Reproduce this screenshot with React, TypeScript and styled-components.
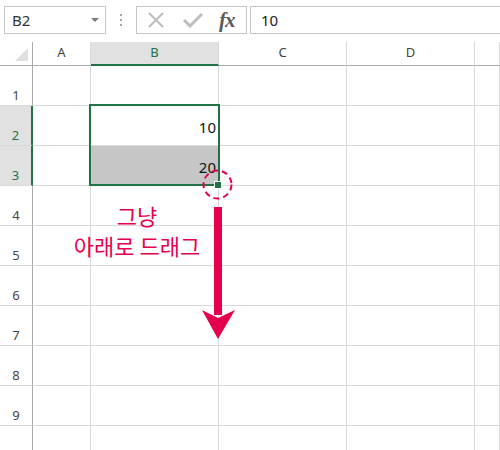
import styled, { createGlobalStyle } from "styled-components"

const GREEN = '#217346'
const PINK = '#e5004f'
const GRID = '#d9d9d9'

const columns = ['A', 'B', 'C', 'D', '']
const rows = [1, 2, 3, 4, 5, 6, 7, 8, 9, 10]

const values: Record<string, string> = { B2: '10', B3: '20' }
const selectedRows = [2, 3]

const GlobalStyle = createGlobalStyle`
    body {
        margin: 0;
        background: #fff;
        font-family: "Noto Sans", "Noto Sans CJK KR", sans-serif;
        overflow: hidden;
    }
`

const App = () => {
    return(
        <Page>
            <GlobalStyle />
            <FormulaBar>
                <NameBox>
                    B2
                    <Caret />
                </NameBox>
                <Dots><i /><i /><i /></Dots>
                <ButtonBox>
                    <svg width="18" height="16" viewBox="0 0 18 16">
                        <path d="M2 1 L16 15 M16 1 L2 15" stroke="#bdbdbd" strokeWidth="2" fill="none" />
                    </svg>
                    <svg width="20" height="16" viewBox="0 0 20 16">
                        <path d="M1 8 L7 14 L19 2" stroke="#bdbdbd" strokeWidth="3" fill="none" />
                    </svg>
                    <Fx>fx</Fx>
                </ButtonBox>
                <FormulaInput>10</FormulaInput>
            </FormulaBar>

            <Sheet>
                <Corner><Triangle /></Corner>
                {columns.map((col) => (
                    <ColHeader key={col || 'E'} $active={col === 'B'}>{col}</ColHeader>
                ))}
                {rows.map((row) => (
                    <RowGroup key={row}>
                        <RowHeader $active={selectedRows.includes(row)}>{row < 10 ? row : ''}</RowHeader>
                        {columns.map((col) => (
                            <Cell key={col + row} $filled={col === 'B' && row === 3}>
                                {values[col + row]}
                            </Cell>
                        ))}
                    </RowGroup>
                ))}
            </Sheet>

            <Selection>
                <Handle />
            </Selection>

            <Overlay width="500" height="450" viewBox="0 0 500 450">
                <circle cx="217.5" cy="184.5" r="14" fill="none" stroke={PINK} strokeWidth="2" strokeDasharray="6 4" />
                <rect x="214" y="207" width="8" height="108" fill={PINK} />
                <polygon points="202,310 218,339 235,310 218,318" fill={PINK} />
            </Overlay>

            <Label>그냥<br />아래로 드래그</Label>
        </Page>
    )
}
export default App


const Page = styled.div`
    position: relative;
    width: 500px;
    height: 450px;
    overflow: hidden;
`

const FormulaBar = styled.div`
    display: flex;
    align-items: center;
    height: 40px;
    padding-left: 4px;
`

const NameBox = styled.div`
    position: relative;
    box-sizing: border-box;
    width: 102px;
    height: 28px;
    border: 1px solid #c6c6c6;
    padding: 3px 0 0 7px;
    font-size: 15px;
    color: #333;
`

const Caret = styled.span`
    position: absolute;
    right: 6px;
    top: 11px;
    border-left: 4px solid transparent;
    border-right: 4px solid transparent;
    border-top: 4px solid #7a7a7a;
`

const Dots = styled.div`
    width: 30px;
    display: flex;
    flex-direction: column;
    align-items: center;
    gap: 3px;
    i {
        width: 2px;
        height: 2px;
        background: #a8a8a8;
    }
`

const ButtonBox = styled.div`
    box-sizing: border-box;
    width: 111px;
    height: 28px;
    border: 1px solid #c6c6c6;
    display: flex;
    align-items: center;
    padding-left: 10px;
    gap: 18px;
`

const Fx = styled.span`
    font-family: "Liberation Serif", serif;
    font-style: italic;
    font-weight: bold;
    font-size: 21px;
    color: #5a5a5a;
    margin-left: -2px;
    letter-spacing: -1px;
`

const FormulaInput = styled.div`
    box-sizing: border-box;
    flex: 1;
    height: 28px;
    margin-left: 3px;
    border: 1px solid #c6c6c6;
    border-right: none;
    padding: 3px 0 0 10px;
    font-size: 15px;
    color: #222;
`

const Sheet = styled.div`
    margin-top: 2px;
    display: grid;
    grid-template-columns: 33px 58px 128px 128px 128px 1fr;
    grid-template-rows: 24px;
    grid-auto-rows: 40px;
`

const RowGroup = styled.div`
    display: contents;
`

const Corner = styled.div`
    position: relative;
    border-right: 1px solid #ababab;
    border-bottom: 1px solid #ababab;
`

const Triangle = styled.div`
    position: absolute;
    right: 4px;
    bottom: 4px;
    width: 0;
    height: 0;
    border-left: 13px solid transparent;
    border-bottom: 13px solid #dfdfdf;
`

const ColHeader = styled.div<{ $active?: boolean }>`
    box-sizing: border-box;
    display: flex;
    align-items: center;
    justify-content: center;
    padding-bottom: 3px;
    font-size: 13px;
    color: ${({ $active }) => $active ? GREEN : '#444'};
    background: ${({ $active }) => $active ? '#e1e1e1' : '#fff'};
    border-right: 1px solid ${GRID};
    border-bottom: ${({ $active }) => $active ? `2px solid ${GREEN}` : '1px solid #ababab'};
    background-clip: padding-box;
`

const RowHeader = styled.div<{ $active?: boolean }>`
    box-sizing: border-box;
    display: flex;
    align-items: flex-end;
    justify-content: center;
    padding-bottom: 1px;
    font-size: 13px;
    color: ${({ $active }) => $active ? GREEN : '#444'};
    background: ${({ $active }) => $active ? '#e1e1e1' : '#fff'};
    border-right: ${({ $active }) => $active ? `2px solid ${GREEN}` : '1px solid #ababab'};
    border-bottom: 1px solid ${GRID};
`

const Cell = styled.div<{ $filled?: boolean }>`
    box-sizing: border-box;
    display: flex;
    align-items: flex-end;
    justify-content: flex-end;
    padding: 0 2px 8px 0;
    font-size: 15px;
    color: #111;
    background: ${({ $filled }) => $filled ? '#c6c6c6' : '#fff'};
    border-right: 1px solid ${GRID};
    border-bottom: 1px solid ${({ $filled }) => $filled ? '#c6c6c6' : GRID};
`

const Selection = styled.div`
    position: absolute;
    left: 89px;
    top: 104px;
    width: 131px;
    height: 82px;
    box-sizing: border-box;
    border: 2px solid ${GREEN};
    pointer-events: none;
`

const Handle = styled.div`
    position: absolute;
    right: -3px;
    bottom: -4px;
    width: 6px;
    height: 6px;
    background: ${GREEN};
    outline: 1px solid #fff;
`

const Overlay = styled.svg`
    position: absolute;
    left: 0;
    top: 0;
    pointer-events: none;
`

const Label = styled.div`
    position: absolute;
    left: 62px;
    top: 200px;
    width: 150px;
    text-align: center;
    font-family: "Noto Sans CJK KR", sans-serif;
    font-size: 22px;
    line-height: 30px;
    color: ${PINK};
`
